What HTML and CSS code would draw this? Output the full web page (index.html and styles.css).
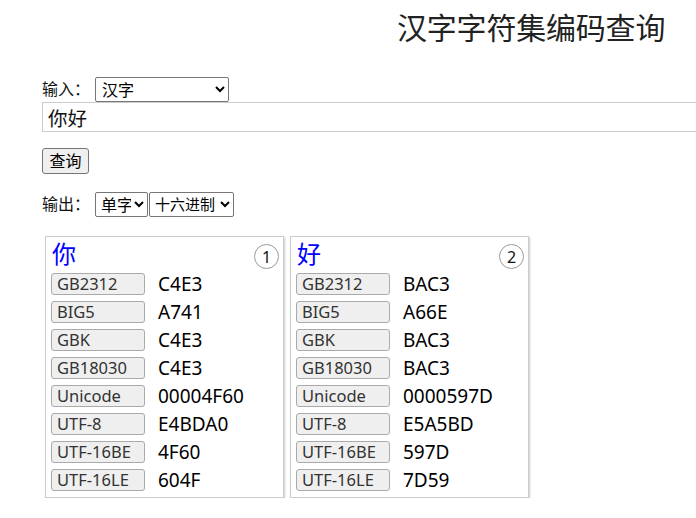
FILE: index.html
```html
<!DOCTYPE html>
<html lang="zh-CN">
<head>
<meta charset="utf-8">
<title>汉字字符集编码查询</title>
<link rel="stylesheet" href="styles.css">
</head>
<body>
<div class="page">
  <h1 class="title">汉字字符集编码查询</h1>
  <div class="row in-row">
    <span class="label">输入：</span>
    <select class="sel sel-input"><option>汉字</option></select>
  </div>
  <input class="text-input" type="text" value="你好">
  <div class="btn-row"><button class="btn">查询</button></div>
  <div class="row out-row">
    <span class="label">输出：</span>
    <select class="sel sel-mode"><option>单字</option></select><select class="sel sel-base"><option>十六进制</option></select>
  </div>
  <div class="cards">
    <div class="card">
      <div class="card-head"><span class="ch">你</span><span class="num">1</span></div>
      <div class="codes">
        <button class="tag">GB2312</button><span class="val">C4E3</span>
        <button class="tag">BIG5</button><span class="val">A741</span>
        <button class="tag">GBK</button><span class="val">C4E3</span>
        <button class="tag">GB18030</button><span class="val">C4E3</span>
        <button class="tag">Unicode</button><span class="val">00004F60</span>
        <button class="tag">UTF-8</button><span class="val">E4BDA0</span>
        <button class="tag">UTF-16BE</button><span class="val">4F60</span>
        <button class="tag">UTF-16LE</button><span class="val">604F</span>
      </div>
    </div>
    <div class="card">
      <div class="card-head"><span class="ch">好</span><span class="num">2</span></div>
      <div class="codes">
        <button class="tag">GB2312</button><span class="val">BAC3</span>
        <button class="tag">BIG5</button><span class="val">A66E</span>
        <button class="tag">GBK</button><span class="val">BAC3</span>
        <button class="tag">GB18030</button><span class="val">BAC3</span>
        <button class="tag">Unicode</button><span class="val">0000597D</span>
        <button class="tag">UTF-8</button><span class="val">E5A5BD</span>
        <button class="tag">UTF-16BE</button><span class="val">597D</span>
        <button class="tag">UTF-16LE</button><span class="val">7D59</span>
      </div>
    </div>
  </div>
</div>
</body>
</html>
```
FILE: styles.css
```css
html, body {
  margin: 0;
  padding: 0;
  overflow: hidden;
  background: #fff;
}
body {
  font-family: "Noto Sans", "Noto Sans CJK SC", sans-serif;
  color: #000;
}
.page {
  padding-left: 42px;
}
.title {
  margin: 0;
  height: 76px;
  padding: 8px 0 0 355px;
  box-sizing: border-box;
  font-size: 30px;
  font-weight: normal;
  line-height: 40px;
  color: #222;
  letter-spacing: -0.2px;
}
.row {
  display: flex;
  align-items: center;
  height: 26px;
}
.label {
  font-size: 16px;
  line-height: 20px;
  width: 53px;
  color: #111;
}
.sel {
  height: 25px;
  font-family: "Noto Sans", "Noto Sans CJK SC", sans-serif;
  font-size: 16px;
  color: #000;
  background: #fff;
  border: 1px solid #767676;
  border-radius: 2px;
  padding: 0 0 0 2px;
  margin: 0;
  box-sizing: border-box;
}
.sel-input { width: 134px; }
.sel-mode { width: 53px; padding-left: 1px; }
.sel-base { width: 85px; margin-left: 1px; padding-left: 1px; font-size: 15px; }
.text-input {
  display: block;
  width: 654px;
  height: 30px;
  box-sizing: border-box;
  border: 1px solid #ccc;
  border-right: none;
  padding: 0 5px;
  margin: 0;
  font-family: "Noto Sans", "Noto Sans CJK SC", sans-serif;
  font-size: 19.5px;
  color: #111;
  outline: none;
}
.btn-row {
  margin-top: 16px;
  height: 26px;
}
.btn {
  height: 26px;
  width: 47px;
  padding: 0;
  box-sizing: border-box;
  border: 1px solid #767676;
  border-radius: 3px;
  background: #efefef;
  font-family: "Noto Sans", "Noto Sans CJK SC", sans-serif;
  font-size: 16px;
  line-height: 22px;
  color: #000;
}
.out-row {
  margin-top: 17px;
}
.cards {
  display: flex;
  gap: 6px;
  margin-top: 19px;
  margin-left: 3px;
}
.card {
  width: 239px;
  box-sizing: border-box;
  border: 1px solid #ccc;
  box-shadow: 1px 1px 2px #ccc;
  padding: 0 4px 6px 5px;
  background: #fff;
}
.card-head {
  display: flex;
  justify-content: space-between;
  align-items: center;
  height: 36px;
}
.ch {
  font-size: 24px;
  line-height: 30px;
  color: #0000ff;
  margin-left: 1px;
  margin-top: -2px;
}
.num {
  width: 25px;
  height: 25px;
  box-sizing: border-box;
  border: 1px solid #999;
  border-radius: 50%;
  display: flex;
  align-items: center;
  justify-content: center;
  font-size: 16px;
  color: #111;
  margin-top: 3px;
}
.codes {
  display: grid;
  grid-template-columns: 94px auto;
  column-gap: 13px;
  row-gap: 6px;
  grid-auto-rows: 22px;
  align-items: center;
}
.tag {
  height: 22px;
  width: 94px;
  box-sizing: border-box;
  margin: 0;
  padding: 0 0 0 5px;
  text-align: left;
  border: 1px solid #aaa;
  border-radius: 3px;
  background: #efefef;
  font-family: "Noto Sans", "Noto Sans CJK SC", sans-serif;
  font-size: 16.5px;
  line-height: 20px;
  color: #333;
}
.val {
  font-size: 19px;
  line-height: 22px;
  color: #000;
}
```
